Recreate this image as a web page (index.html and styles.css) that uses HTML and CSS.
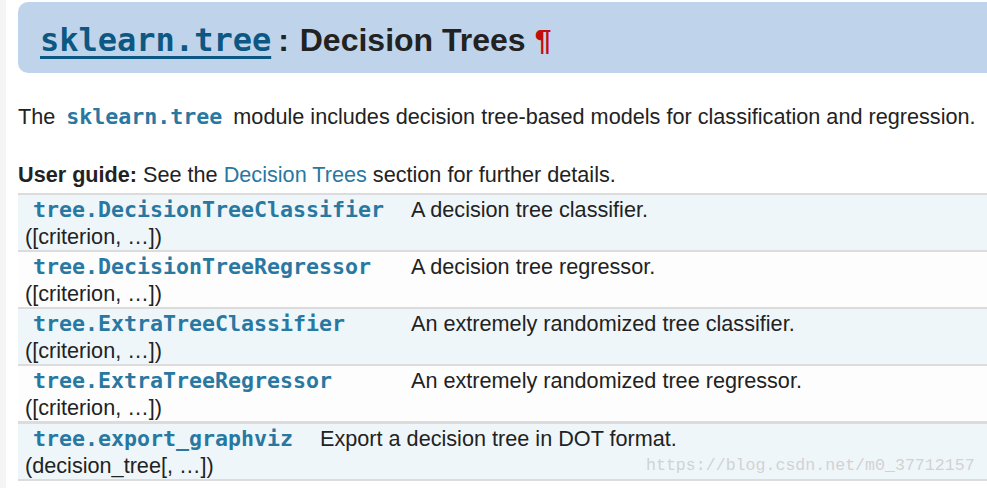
FILE: index.html
```html
<!DOCTYPE html>
<html>
<head>
<meta charset="utf-8">
<link rel="stylesheet" href="styles.css">
</head>
<body>
<div class="page">
  <h1 class="title"><a class="title-code" href="#">sklearn.tree</a><span class="colon">:</span> Decision Trees<span class="pilcrow">¶</span></h1>
  <p class="intro">The <code class="inline">sklearn.tree</code> module includes decision tree-based models for classification and regression.</p>
  <p class="guide"><strong>User guide:</strong> See the <a class="link" href="#">Decision Trees</a> section for further details.</p>
  <table class="api api-first">
    <colgroup><col class="col-name"><col></colgroup>
    <tr class="odd"><td class="name"><code class="cls">tree.DecisionTreeClassifier</code>([criterion, …])</td><td class="desc">A decision tree classifier.</td></tr>
    <tr class="even"><td class="name"><code class="cls">tree.DecisionTreeRegressor</code>([criterion, …])</td><td class="desc">A decision tree regressor.</td></tr>
    <tr class="odd"><td class="name"><code class="cls">tree.ExtraTreeClassifier</code>([criterion, …])</td><td class="desc">An extremely randomized tree classifier.</td></tr>
    <tr class="even last"><td class="name"><code class="cls">tree.ExtraTreeRegressor</code>([criterion, …])</td><td class="desc">An extremely randomized tree regressor.</td></tr>
  </table>
  <table class="api api-second">
    <colgroup><col class="col-name"><col></colgroup>
    <tr class="odd"><td class="name"><code class="cls">tree.export_graphviz</code>(decision_tree[, …])</td><td class="desc">Export a decision tree in DOT format.</td></tr>
  </table>
  <div class="watermark">https://blog.csdn.net/m0_37712157</div>
</div>
</body>
</html>
```

FILE: styles.css
```css
html, body {
  margin: 0;
  padding: 0;
}
body {
  background: #f5f5f5;
  font-family: "Liberation Sans", Arial, sans-serif;
  color: #222;
  overflow: hidden;
}
.page {
  position: relative;
  margin-left: 6px;
  background: #fff;
  padding: 2px 0 20px 12px;
  min-height: 470px;
}
.title {
  margin: 0;
  height: 71px;
  box-sizing: border-box;
  background: #bfd4ea;
  border-radius: 10px 0 0 10px;
  padding-left: 22px;
  padding-top: 5px;
  display: flex;
  align-items: center;
  font-family: "Liberation Sans", Arial, sans-serif;
  font-weight: bold;
  font-size: 32px;
  color: #222;
  white-space: pre;
}
.title-code {
  font-family: "DejaVu Sans Mono", monospace;
  font-weight: bold;
  font-size: 32px;
  color: #0d5783;
  text-decoration: underline;
  text-decoration-thickness: 3px;
  text-underline-offset: 5px;
}
.colon {
  margin-left: 7px;
  margin-right: 2px;
}
.pilcrow {
  color: #c40c0c;
  margin-left: 9px;
  font-size: 30px;
}
.intro, .guide {
  font-size: 21.65px;
  line-height: 27px;
  margin: 0;
}
.intro {
  margin-top: 30px;
}
.guide {
  margin-top: 31px;
  margin-bottom: 5px;
}
.inline {
  font-family: "DejaVu Sans Mono", monospace;
  font-weight: bold;
  font-size: 21.6px;
  color: #2878a2;
  padding: 0 5px;
}
.link {
  color: #2878a2;
  text-decoration: none;
}
.api {
  border-collapse: collapse;
  table-layout: fixed;
  width: 100%;
  font-size: 21.65px;
  line-height: 26.5px;
}
.api tr {
  border-top: 2px solid #dcdcdc;
}
.api td {
  vertical-align: top;
  padding: 2px 0 0 7px;
  height: 55px;
  box-sizing: border-box;
}
.api .odd {
  background: #eff6fa;
}
.api .even {
  background: #fdfdfd;
}
.api-first .last {
  border-bottom: 1px solid #dcdcdc;
}
.api-second tr {
  border-bottom: 2px solid #dcdcdc;
}
.api-first .col-name {
  width: 393px;
}
.api-second .col-name {
  width: 302px;
}
.api td.desc {
  padding-left: 0;
  color: #222;
}
.cls {
  display: block;
  font-family: "DejaVu Sans Mono", monospace;
  font-weight: bold;
  font-size: 21.6px;
  color: #2878a2;
  padding-left: 8px;
}
.watermark {
  position: absolute;
  left: 640px;
  top: 456px;
  font-family: "Liberation Mono", monospace;
  font-size: 16.6px;
  color: #d2d2d2;
}
```
